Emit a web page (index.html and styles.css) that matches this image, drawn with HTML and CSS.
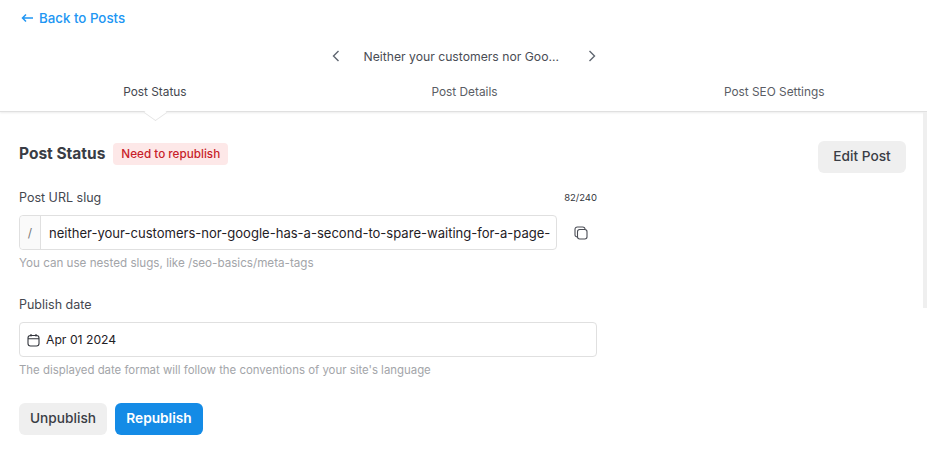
FILE: index.html
```html
<!DOCTYPE html>
<html lang="en">
<head>
  <meta charset="UTF-8">
  <title>Post Status</title>
  <link rel="stylesheet" href="styles.css">
</head>
<body>

  <div class="top">
    <a class="back" href="#">
      <svg width="13" height="10" viewBox="0 0 13 10" fill="none" stroke="#2196f3" stroke-width="1.5"><path d="M12 5H1.500M5 1.500 1.500 5 5 8.500"/></svg>
      Back to Posts
    </a>
    <div class="pager">
      <svg width="8" height="12" viewBox="0 0 8 12" fill="none" stroke="#5f6670" stroke-width="1.4"><path d="M6.500 1 1.500 6l5 5"/></svg>
      <span class="pager-title">Neither your customers nor Goo...</span>
      <svg width="8" height="12" viewBox="0 0 8 12" fill="none" stroke="#5f6670" stroke-width="1.4"><path d="M1.500 1l5 5-5 5"/></svg>
    </div>
    <div class="tabs">
      <div class="tab tab-active">Post Status</div>
      <div class="tab">Post Details</div>
      <div class="tab">Post SEO Settings</div>
    </div>
  </div>

  <div class="content">
    <div class="head-row">
      <div class="head-left">
        <h2>Post Status</h2>
        <span class="badge">Need to republish</span>
      </div>
      <button class="btn btn-grey">Edit Post</button>
    </div>

    <div class="form">
      <div class="label-row">
        <label>Post URL slug</label>
        <span class="count">82/240</span>
      </div>
      <div class="slug-row">
        <div class="field slug-field">
          <span class="prefix">/</span>
          <span class="value">neither-your-customers-nor-google-has-a-second-to-spare-waiting-for-a-page-</span>
        </div>
        <svg class="copy" width="14" height="14" viewBox="0 0 14 14" fill="none" stroke="#4a4d55" stroke-width="1.1"><rect x="3.500" y="3.500" width="9.500" height="9.500" rx="2.200"/><path d="M3.500 11A2.300 2.300 0 0 1 1 8.700V3.300A2.300 2.300 0 0 1 3.300 1h5.400A2.300 2.300 0 0 1 11 3.500"/></svg>
      </div>
      <p class="hint hint-slug">You can use nested slugs, like /seo-basics/meta-tags</p>

      <div class="label-row label-date">
        <label>Publish date</label>
      </div>
      <div class="field date-field">
        <svg width="13" height="14" viewBox="0 0 13 14" fill="none" stroke="#33363d" stroke-width="1.1"><rect x="1" y="2.500" width="11" height="10.500" rx="2.500"/><path d="M1 5.800h11M4 1v2.500M9 1v2.500"/></svg>
        <span class="value">Apr 01 2024</span>
      </div>
      <p class="hint hint-date">The displayed date format will follow the conventions of your site's language</p>

      <div class="actions">
        <button class="btn btn-grey">Unpublish</button>
        <button class="btn btn-blue">Republish</button>
      </div>
    </div>
  </div>

  <div class="scroll-thumb"></div>

</body>
</html>
```

FILE: styles.css
```css
body {
  margin: 0;
  height: 465px;
  overflow: hidden;
  font-family: Inter, "Liberation Sans", sans-serif;
  font-size: 12.5px;
  color: #33363d;
  background: #fff;
  position: relative;
}
.top {
  border-bottom: 1px solid #e0e0e0;
  box-shadow: 0 1px 2px rgba(0, 0, 0, 0.08);
  height: 111px;
  position: relative;
}
.back {
  display: flex;
  align-items: center;
  gap: 5px;
  padding: 10px 0 0 21px;
  height: 16px;
  color: #2196f3;
  font-size: 13.300px;
  font-weight: 500;
  text-decoration: none;
}
.pager {
  display: flex;
  justify-content: center;
  align-items: center;
  gap: 24px;
  margin-top: 21px;
  height: 18px;
}
.pager-title {
  width: 200px;
  white-space: nowrap;
  font-size: 12.200px;
  color: #4a4d55;
}
.tabs {
  display: grid;
  grid-template-columns: repeat(3, 1fr);
  width: 929px;
  margin-top: 19px;
}
.tab {
  text-align: center;
  font-size: 11.850px;
  line-height: 16px;
  color: #5a5d65;
}
.tab-active {
  color: #44474f;
}
/* little notch under the active tab */
.tab-active::after {
  content: "";
  position: absolute;
  left: 146.500px;
  top: 103.500px;
  width: 16px;
  height: 16px;
  background: #fff;
  border-right: 1px solid #e4e4e4;
  border-bottom: 1px solid #e4e4e4;
  transform: scaleY(0.7) rotate(45deg);
}
.content {
  padding: 29px 21px 0 19px;
}
.head-row {
  display: flex;
  justify-content: space-between;
  align-items: flex-start;
}
.head-left {
  display: flex;
  align-items: center;
  gap: 8px;
  margin-top: 2px;
}
h2 {
  margin: 0;
  font-size: 15.500px;
  font-weight: 700;
  line-height: 22px;
  color: #3a3d45;
}
.badge {
  background: #fde8e8;
  color: #c81e2a;
  font-size: 11.700px;
  font-weight: 500;
  line-height: 22px;
  padding: 0 8px;
  border-radius: 4px;
}
.btn {
  height: 32px;
  width: 88px;
  border: none;
  border-radius: 6px;
  font-family: inherit;
  font-size: 13.700px;
  font-weight: 500;
  padding: 0 0 2px;
}
.btn-grey {
  background: #efefef;
  color: #3a3d45;
}
.btn-blue {
  background: #148be6;
  color: #fff;
  font-weight: 600;
}
.form {
  width: 578px;
  margin-top: 15px;
}
.label-row {
  display: flex;
  justify-content: space-between;
  align-items: center;
  height: 18px;
  margin-bottom: 9px;
}
.label-row label {
  font-size: 12.500px;
  color: #44474f;
}
.count {
  font-size: 9.500px;
  color: #33363d;
}
.label-date {
  margin-top: 25px;
}
.slug-row {
  display: flex;
  align-items: center;
  width: 578px;
  justify-content: space-between;
}
.field {
  display: flex;
  align-items: center;
  box-sizing: border-box;
  height: 35px;
  border: 1px solid #e0e0e0;
  border-radius: 4px;
  background: #fff;
}
.slug-field {
  width: 538px;
}
.copy {
  margin-right: 9px;
}
.prefix {
  width: 20px;
  height: 33px;
  line-height: 33px;
  text-align: center;
  background: #fafafa;
  border-right: 1px solid #e0e0e0;
  border-radius: 4px 0 0 4px;
  color: #777;
  font-size: 12px;
}
.value {
  font-size: 12.200px;
  color: #1f2126;
  white-space: nowrap;
  overflow: hidden;
}
.slug-field .value {
  font-size: 13.050px;
  padding-left: 8px;
  width: 505px;
}
.date-field {
  gap: 6px;
  padding-left: 7px;
}
.hint {
  margin: 6px 0 0;
  line-height: 14px;
  color: #a3a5a9;
}
.hint-slug {
  font-size: 11.650px;
}
.hint-date {
  font-size: 11.400px;
}
.actions {
  display: flex;
  gap: 8px;
  margin-top: 26px;
}
.scroll-thumb {
  position: absolute;
  right: 0;
  top: 112px;
  width: 4px;
  height: 196px;
  background: #efefef;
}
```
